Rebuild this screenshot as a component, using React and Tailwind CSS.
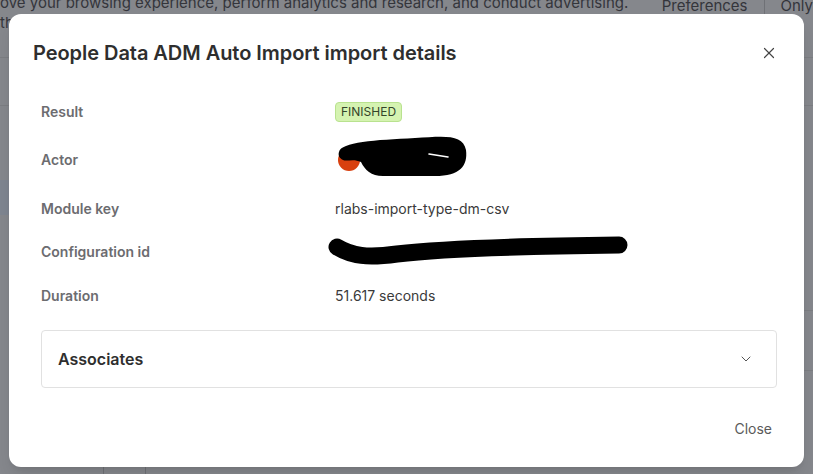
import { X, ChevronDown } from 'lucide-react'

const ROWS = [
  { label: 'Result', kind: 'badge', value: 'FINISHED' },
  { label: 'Actor', kind: 'actor' },
  { label: 'Module key', kind: 'text', value: 'rlabs-import-type-dm-csv' },
  { label: 'Configuration id', kind: 'redacted' },
  { label: 'Duration', kind: 'text', value: '51.617 seconds' },
]

function Value({ row }) {
  if (row.kind === 'badge') {
    return (
      <span className="inline-flex h-5 items-center rounded border border-[#b9e28f] bg-[#d5f3b1] px-[5px] text-[12px] text-[#34442a]">
        {row.value}
      </span>
    )
  }
  if (row.kind === 'actor') {
    // avatar, scribbled over in the screenshot
    return (
      <div className="relative h-7 w-[140px]">
        <svg className="absolute -top-[24px] left-0" width="140" height="60" viewBox="0 0 140 60">
          <circle cx="14" cy="38" r="11" fill="#d8400f" />
          <path d="M4 30 C6 20 40 18 80 16 C110 14 128 12 131 28 C133 44 125 54 100 54 L48 54 C36 54 30 48 26 40 C18 36 12 40 8 38 C4 36 3 33 4 30 Z" fill="#000" />
          <path d="M94 32 L113 35" stroke="#fff" strokeWidth="1.6" strokeLinecap="round" />
        </svg>
      </div>
    )
  }
  if (row.kind === 'redacted') {
    return (
      <div className="relative h-5 w-[300px]">
        <svg className="absolute -left-[8px] -top-[10px]" width="310" height="40" viewBox="0 0 310 40">
          <path d="M10 15 C25 24 40 26 70 22 C120 16 200 14 292 13" fill="none" stroke="#000" strokeWidth="17" strokeLinecap="round" />
        </svg>
      </div>
    )
  }
  return <span className="text-[14px] text-[#3a3a3a]">{row.value}</span>
}

export default function App() {
  return (
    <div className="relative h-[474px] w-[813px] overflow-hidden bg-[#85878c] font-['Inter',sans-serif]">
      {/* page behind the dim overlay */}
      <div className="flex h-[14px] items-start text-[15px] leading-[15px] text-[#34353b]">
        <p className="-mt-[5px] w-[666px] whitespace-nowrap">ove your browsing experience, perform analytics and research, and conduct advertising.</p>
        <span className="-mt-[2px]">Preferences</span>
        <div className="mx-[16px] h-[14px] w-px bg-[#6f7176]" />
        <span className="-mt-[2px]">Only</span>
      </div>
      <div className="absolute left-0 top-[12px] text-[15px] text-[#34353b]">th</div>
      <div className="absolute left-0 top-[57px] h-px w-full bg-[#7b7d82]" />
      <div className="absolute left-0 top-[105px] h-px w-full bg-[#7b7d82]" />
      <div className="absolute left-0 top-[180px] h-[35px] w-[9px] bg-[#7e8590]" />
      <div className="absolute right-0 top-[310px] h-px w-[9px] bg-[#7b7d82]" />
      <div className="absolute right-0 top-[370px] h-px w-[9px] bg-[#7b7d82]" />
      <div className="absolute bottom-0 left-[103px] h-[7px] w-px bg-[#6f7176]" />
      <div className="absolute bottom-0 left-[145px] h-[7px] w-px bg-[#6f7176]" />

      {/* modal */}
      <div className="absolute left-[9px] top-[14px] flex h-[453px] w-[795px] flex-col rounded-xl bg-white shadow-lg">
        <div className="flex items-center justify-between pl-[24px] pr-[26px] pt-[24px]">
          <h2 className="text-[20px] font-semibold leading-[30px] tracking-[-0.05px] text-[#2e2e2e]">People Data ADM Auto Import import details</h2>
          <X size={18} strokeWidth={1.6} className="text-[#444]" />
        </div>

        <div className="mt-[34px] flex flex-col pl-[32px] pr-[27px]">
          {ROWS.map((row, i) => (
            <div key={row.label} className={`flex items-center ${i === 0 ? '' : i > 2 ? 'mt-[23px]' : 'mt-6'}`}>
              <div className="w-[294px] text-[14px] font-semibold leading-5 text-[#6c6c70]">{row.label}</div>
              <Value row={row} />
            </div>
          ))}

          <div className="mt-6 flex h-[58px] items-center justify-between rounded border border-[#e1e1e1] pl-[16px] pr-[22px]">
            <span className="text-[16px] font-semibold text-[#2e2e2e]">Associates</span>
            <ChevronDown size={16} strokeWidth={1.5} className="text-[#555]" />
          </div>
        </div>

        <div className="mt-auto flex justify-end pb-[21px] pr-[32px]">
          <button className="h-9 text-[14px] text-[#5a5a5a]">Close</button>
        </div>
      </div>
    </div>
  )
}
